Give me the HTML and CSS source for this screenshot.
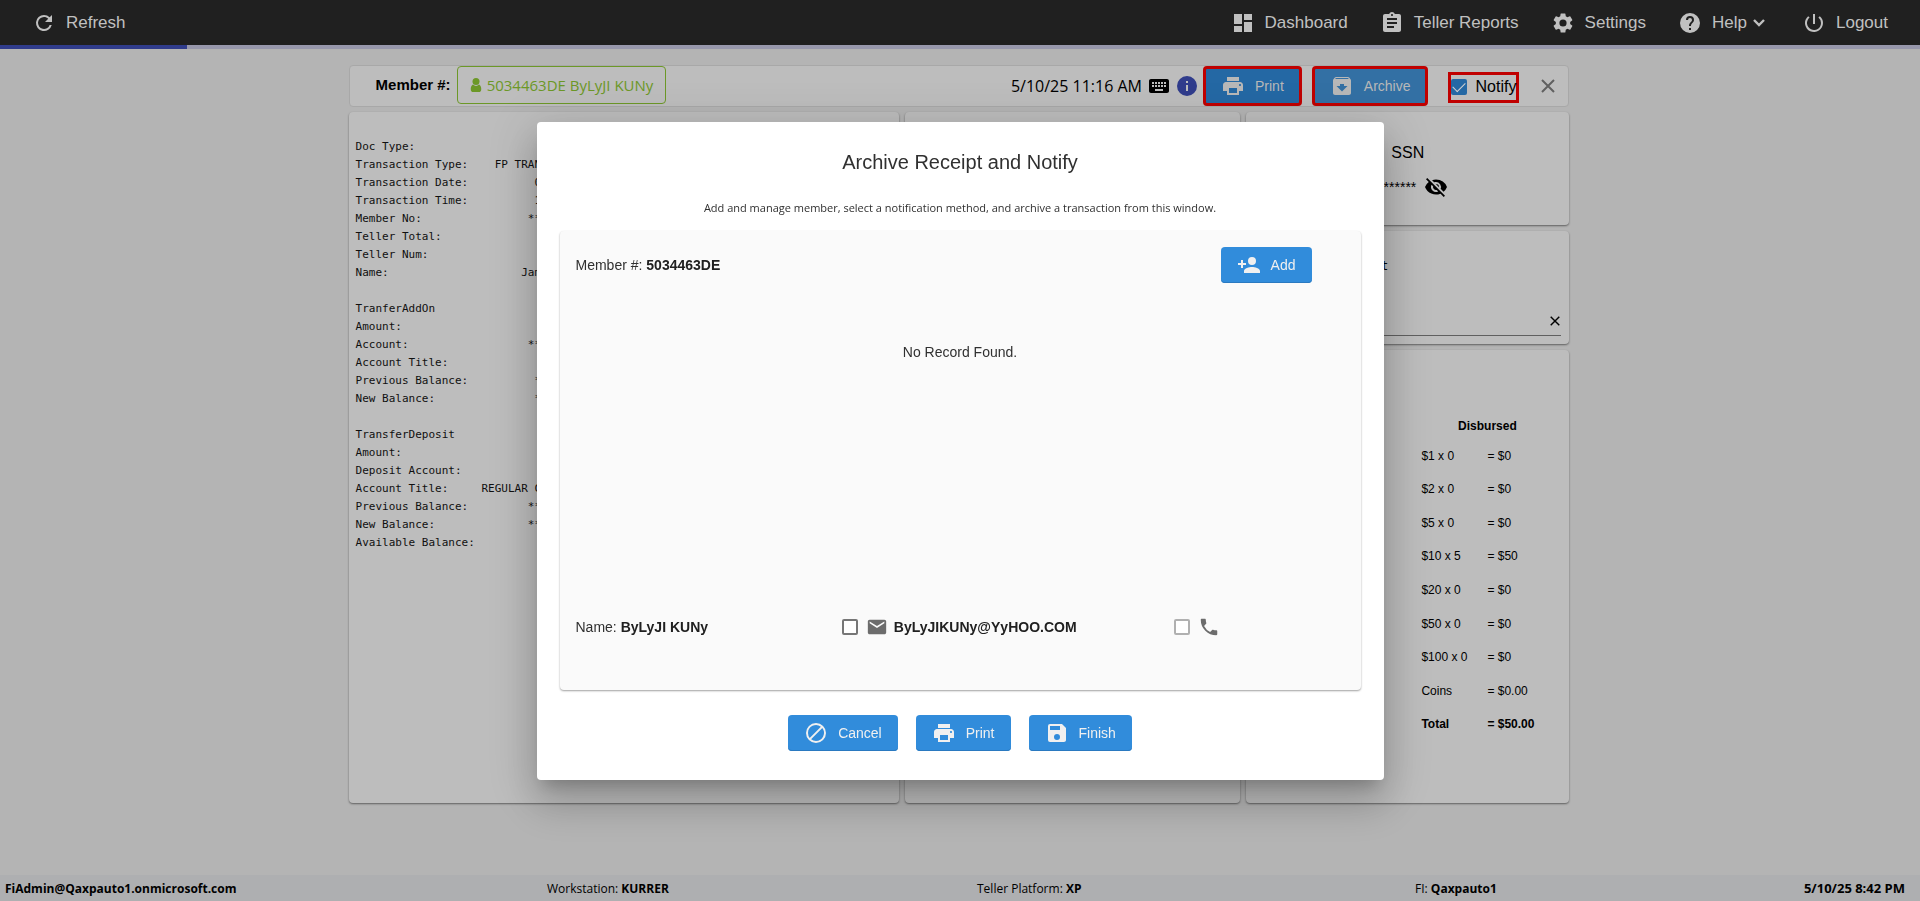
FILE: index.html
```html
<!DOCTYPE html>
<html lang="en">
	<head>
		<meta charset="utf-8"/>
		<title>Archive Receipt and Notify</title>
		<link rel="stylesheet" href="styles.css">
	</head>
	<body>
		<svg class="sprite" aria-hidden="true">
			<symbol id="i-print" viewBox="0 0 24 24"><path d="M19 8H5c-1.66 0-3 1.34-3 3v6h4v4h12v-4h4v-6c0-1.66-1.34-3-3-3zm-3 11H8v-5h8v5zm3-7c-.55 0-1-.45-1-1s.45-1 1-1 1 .45 1 1-.45 1-1 1zm-1-9H6v4h12V3z"/></symbol>
		</svg>

		<div class="page">
			<nav class="topbar flex">
				<a href="#" class="refresh"><svg class="icon" viewBox="0 0 24 24"><path d="M17.65 6.35A7.96 7.96 0 0 0 12 4a8 8 0 1 0 7.73 10h-2.08A6 6 0 1 1 12 6c1.66 0 3.14.69 4.22 1.78L13 11h7V4z"/></svg>Refresh</a>
				<a href="#"><svg class="icon" viewBox="0 0 24 24"><path d="M3 13h8V3H3v10zm0 8h8v-6H3v6zm10 0h8V11h-8v10zm0-18v6h8V3h-8z"/></svg>Dashboard</a>
				<a href="#"><svg class="icon" viewBox="0 0 24 24"><path d="M19 3h-4.18C14.4 1.84 13.3 1 12 1s-2.4.84-2.82 2H5c-1.1 0-2 .9-2 2v14c0 1.100.9 2 2 2h14c1.1 0 2-.9 2-2V5c0-1.100-.9-2-2-2zm-7 0c.55 0 1 .45 1 1s-.45 1-1 1-1-.45-1-1 .45-1 1-1zm2 14H7v-2h7v2zm3-4H7v-2h10v2zm0-4H7V7h10v2z"/></svg>Teller Reports</a>
				<a href="#"><svg class="icon" viewBox="0 0 24 24"><path d="M19.14 12.94c.04-.3.06-.61.06-.94s-.02-.64-.07-.94l2.03-1.58a.49.49 0 0 0 .12-.61l-1.92-3.32a.49.49 0 0 0-.59-.22l-2.39.96a7 7 0 0 0-1.62-.94l-.36-2.54A.48.48 0 0 0 13.920 2.400h-3.840a.48.48 0 0 0-.47.41l-.36 2.54a7.400 7.400 0 0 0-1.620.94l-2.390-.96a.48.48 0 0 0-.59.22L2.740 8.870a.47.47 0 0 0 .12.61l2.030 1.580c-.05.3-.09.63-.09.94s.02.64.07.94l-2.030 1.580a.49.49 0 0 0-.12.61l1.920 3.320c.12.22.37.29.59.22l2.390-.96c.5.38 1.030.7 1.620.94l.36 2.540c.05.24.24.41.48.41h3.840c.24 0 .44-.17.47-.41l.36-2.540a7 7 0 0 0 1.620-.94l2.390.96c.22.08.47 0 .59-.22l1.920-3.320a.47.47 0 0 0-.12-.61zM12 15.600a3.600 3.600 0 1 1 0-7.200 3.600 3.600 0 0 1 0 7.200z"/></svg>Settings</a>
				<a href="#" class="help"><svg class="icon" viewBox="0 0 24 24"><path d="M12 2a10 10 0 1 0 0 20 10 10 0 0 0 0-20zm1 17h-2v-2h2v2zm2.070-7.750l-.9.92C13.450 12.900 13 13.500 13 15h-2v-.5c0-1.100.45-2.100 1.170-2.830l1.240-1.260c.37-.36.59-.86.59-1.410a2 2 0 1 0-4 0H8a4 4 0 1 1 8 0c0 .88-.36 1.680-.93 2.250z"/></svg>Help<svg class="chevron" viewBox="0 0 12 8"><path d="M1 1l5 5 5-5"/></svg></a>
				<a href="#"><svg class="icon" viewBox="0 0 24 24"><path d="M13 3h-2v10h2V3zm4.830 2.170l-1.420 1.420A6.920 6.920 0 0 1 19 12a7 7 0 1 1-11.420-5.420L6.170 5.170A9 9 0 1 0 21 12a8.960 8.960 0 0 0-3.170-6.830z"/></svg>Logout</a>
			</nav>
			<div class="progress"><div class="progress-value"></div></div>

			<main class="content">
				<div class="toolbar flex">
					<b class="member-label">Member #:</b>
					<button type="button" class="member-chip flex"><svg viewBox="0 0 12 16"><circle cx="6" cy="4" r="4"/><path d="M2.500 7.500C1 8.500 0 10 0 12.500 0 15 1 16 2.500 16h7c1.500 0 2.500-1 2.500-3.500 0-2.500-1-4-2.500-5-2 2-5 2-7 0z"/></svg>5034463DE ByLyJI KUNy</button>
					<div class="tools flex">
						<span class="date">5/10/25 11:16 AM</span>
						<svg class="icon" viewBox="0 0 24 24"><path d="M20 5H4c-1.100 0-1.990.9-1.990 2L2 17c0 1.100.9 2 2 2h16c1.100 0 2-.9 2-2V7c0-1.100-.9-2-2-2zm-9 3h2v2h-2V8zm0 3h2v2h-2v-2zM8 8h2v2H8V8zm0 3h2v2H8v-2zm-1 2H5v-2h2v2zm0-3H5V8h2v2zm9 7H8v-2h8v2zm0-4h-2v-2h2v2zm0-3h-2V8h2v2zm3 3h-2v-2h2v2zm0-3h-2V8h2v2z"/></svg>
						<svg class="icon info" viewBox="0 0 24 24"><path d="M12 2a10 10 0 1 0 0 20 10 10 0 0 0 0-20zm1 15h-2v-6h2v6zm0-8h-2V7h2v2z"/></svg>
						<button type="button" class="btn marked"><svg class="icon"><use href="#i-print"/></svg>Print</button>
						<button type="button" class="btn marked focused"><svg class="icon" viewBox="0 0 24 24"><path d="M20.540 5.230l-1.390-1.680A1.450 1.450 0 0 0 18 3H6c-.47 0-.88.21-1.160.55L3.460 5.230C3.170 5.570 3 6.020 3 6.500V19c0 1.100.9 2 2 2h14c1.100 0 2-.9 2-2V6.500c0-.48-.17-.93-.46-1.270zM12 17.500L6.500 12H10v-2h4v2h3.500L12 17.500zM5.120 5l.81-1h12l.94 1H5.120z"/></svg>Archive</button>
						<label class="notify flex"><input type="checkbox" checked/>Notify</label>
						<button type="button" class="plain" aria-label="Close"><svg class="close" viewBox="0 0 14 14"><path d="M1 1l12 12M13 1L1 13"/></svg></button>
					</div>
				</div>

				<div class="columns">
					<section class="panel receipt">
<pre>
Doc Type:                   RECEIPT
Transaction Type:    FP TRANSACTION
Transaction Date:          05-10-25
Transaction Time:          11:16:05
Member No:                *****63DE
Teller Total:                     1
Teller Num:                    1491
Name:                    James Dean

TranferAddOn
Amount:                      500.00
Account:                  ****85-42
Account Title:                HEROC
Previous Balance:          ********
New Balance:               ********

TransferDeposit
Amount:                      500.00
Deposit Account:            **585-4
Account Title:     REGULAR CHECKING
Previous Balance:         *********
New Balance:              *********
Available Balance:          *******
</pre>
					</section>
					<section class="panel scans"></section>
					<div class="side">
						<section class="panel ssn">
							<div>SSN</div>
							<div class="masked flex">*********<svg class="icon" viewBox="0 0 24 24"><path d="M12 7a5 5 0 0 1 4.640 6.830l2.920 2.920A11.820 11.820 0 0 0 22.990 12 11.820 11.820 0 0 0 12 4.500c-1.400 0-2.740.25-3.980.7l2.160 2.160C10.740 7.130 11.350 7 12 7zM2 4.270l2.280 2.280.46.46A11.800 11.800 0 0 0 1 12a11.820 11.820 0 0 0 15.380 6.660l.42.420L19.730 22 21 20.730 3.270 3 2 4.270zM7.530 9.800l1.550 1.550A3 3 0 0 0 12.650 14.920l1.550 1.550A5 5 0 0 1 7.530 9.800zm4.310-.78l3.150 3.150.02-.16a3 3 0 0 0-3-3l-.17.01z"/></svg></div>
						</section>
						<section class="panel client">
							<label for="note">Cash to the client</label>
							<div class="field flex">
								<input type="text" id="note"/>
								<button type="button" class="plain" aria-label="Clear"><svg class="clear" viewBox="0 0 14 14"><path d="M1 1l12 12M13 1L1 13"/></svg></button>
							</div>
						</section>
						<section class="panel cash flex">
							<table>
								<caption>Received</caption>
								<tr><td>$1 x 0</td><td>= $0</td></tr>
								<tr><td>$2 x 0</td><td>= $0</td></tr>
								<tr><td>$5 x 0</td><td>= $0</td></tr>
								<tr><td>$10 x 0</td><td>= $0</td></tr>
								<tr><td>$20 x 0</td><td>= $0</td></tr>
								<tr><td>$50 x 0</td><td>= $0</td></tr>
								<tr><td>$100 x 2</td><td>= $200</td></tr>
								<tr><td>Coins</td><td>= $0.00</td></tr>
								<tr class="total"><td>Total</td><td>= $200.00</td></tr>
							</table>
							<table>
								<caption>Disbursed</caption>
								<tr><td>$1 x 0</td><td>= $0</td></tr>
								<tr><td>$2 x 0</td><td>= $0</td></tr>
								<tr><td>$5 x 0</td><td>= $0</td></tr>
								<tr><td>$10 x 5</td><td>= $50</td></tr>
								<tr><td>$20 x 0</td><td>= $0</td></tr>
								<tr><td>$50 x 0</td><td>= $0</td></tr>
								<tr><td>$100 x 0</td><td>= $0</td></tr>
								<tr><td>Coins</td><td>= $0.00</td></tr>
								<tr class="total"><td>Total</td><td>= $50.00</td></tr>
							</table>
						</section>
					</div>
				</div>
			</main>

			<footer class="footer">
				<b>FiAdmin@Qaxpauto1.onmicrosoft.com</b>
				<span>Workstation: <b>KURRER</b></span>
				<span>Teller Platform: <b>XP</b></span>
				<span>FI: <b>Qaxpauto1</b></span>
				<b class="clock">5/10/25 8:42 PM</b>
			</footer>
		</div>

		<div class="overlay flex">
			<div class="dialog" role="dialog" aria-modal="true" aria-labelledby="dialog-title">
				<h1 id="dialog-title">Archive Receipt and Notify</h1>
				<p class="description">Add and manage member, select a notification method, and archive a transaction from this window.</p>
				<div class="card">
					<div class="card-head flex">
						<span>Member #: <b>5034463DE</b></span>
						<button type="button" class="btn"><svg class="icon" viewBox="0 0 24 24"><path d="M15 12a4 4 0 1 0 0-8 4 4 0 0 0 0 8zm-9-2V7H4v3H1v2h3v3h2v-3h3v-2H6zm9 4c-2.670 0-8 1.340-8 4v2h16v-2c0-2.660-5.330-4-8-4z"/></svg>Add</button>
					</div>
					<div class="empty">No Record Found.</div>
					<div class="contact">
						<span>Name: <b>ByLyJI KUNy</b></span>
						<label class="flex"><input type="checkbox" class="box"/><svg class="icon" viewBox="0 0 24 24"><path d="M20 4H4c-1.100 0-1.990.9-1.990 2L2 18c0 1.100.9 2 2 2h16c1.100 0 2-.9 2-2V6c0-1.100-.9-2-2-2zm0 4l-8 5-8-5V6l8 5 8-5v2z"/></svg><b>ByLyJIKUNy@YyHOO.COM</b></label>
						<label class="flex" aria-label="Phone"><input type="checkbox" class="box" disabled/><svg class="icon" viewBox="0 0 24 24"><path d="M6.620 10.790a15.150 15.150 0 0 0 6.590 6.590l2.200-2.200c.27-.27.67-.36 1.020-.24 1.120.37 2.330.57 3.570.57.55 0 1 .45 1 1V20c0 .55-.45 1-1 1A17 17 0 0 1 3 4c0-.55.45-1 1-1h3.500c.55 0 1 .45 1 1 0 1.250.2 2.450.57 3.570.11.35.03.74-.25 1.020l-2.200 2.200z"/></svg></label>
					</div>
				</div>
				<div class="actions flex">
					<button type="button" class="btn"><svg class="icon" viewBox="0 0 24 24"><path d="M12 2a10 10 0 1 0 0 20 10 10 0 0 0 0-20zM4 12a8 8 0 0 1 12.900-6.310L5.690 16.900A7.900 7.900 0 0 1 4 12zm8 8a7.900 7.900 0 0 1-4.900-1.690L18.310 7.100A8 8 0 0 1 12 20z"/></svg>Cancel</button>
					<button type="button" class="btn"><svg class="icon"><use href="#i-print"/></svg>Print</button>
					<button type="button" class="btn"><svg class="icon" viewBox="0 0 24 24"><path d="M17 3H5a2 2 0 0 0-2 2v14a2 2 0 0 0 2 2h14c1.100 0 2-.9 2-2V7l-4-4zm-5 16a3 3 0 1 1 0-6 3 3 0 0 1 0 6zm3-10H5V5h10v4z"/></svg>Finish</button>
				</div>
			</div>
		</div>
	</body>
</html>
```
FILE: styles.css
```css
html, body {
	height: 100%;
	margin: 0;
}
body {
	background: #b4b4b4;
	color: #000;
	font-family: "Liberation Sans", Arial, sans-serif;
	font-size: 16px;
}
* {
	box-sizing: border-box;
}
.flex {
	display: flex;
	align-items: center;
}
button, input {
	font-family: inherit;
}
button {
	cursor: pointer;
}
.sprite {
	display: none;
}
.icon {
	flex: none;
	width: 24px;
	height: 24px;
	fill: currentColor;
}
.page {
	display: flex;
	flex-direction: column;
	min-height: 100%;
}

/* top bar */
.topbar {
	height: 45px;
	padding: 0 32px;
	gap: 32px;
	background: #202020;
	font-size: 17px;
}
.topbar a {
	display: flex;
	align-items: center;
	gap: 10px;
	color: #c0c0c0;
	text-decoration: none;
}
.topbar .refresh {
	margin-right: auto;
}
.topbar .help {
	margin-right: 5px;
}
.chevron {
	width: 12px;
	height: 8px;
	margin-left: -4px;
	fill: none;
	stroke: currentColor;
	stroke-width: 2.400;
}
.progress {
	height: 4px;
	background: #9898ac;
}
.progress-value {
	width: 187px;
	height: 100%;
	background: #303c8c;
}

/* content */
.content {
	flex: 1;
	width: 64%;
	margin: 16px auto 0;
	padding: 0 5px 0 3px;
}
.toolbar {
	height: 42px;
	padding: 0 7px 0 26px;
	border: 1px solid #a8a8a8;
	border-radius: 4px;
	background: #bdbdbd;
}
.member-label {
	padding-bottom: 4px;
	font-size: 15px;
}
.member-chip {
	height: 38px;
	margin: 0 0 2px 6px;
	padding: 0 12px;
	gap: 5px;
	border: 1px solid #6c9827;
	border-radius: 4px;
	background: none;
	color: #6c9827;
	font-family: "Open Sans", sans-serif;
	font-size: 15px;
}
.member-chip svg {
	width: 12px;
	height: 14px;
	fill: currentColor;
}
.tools {
	margin-left: auto;
}
.date {
	margin-right: 5px;
	font-family: "Open Sans", sans-serif;
	font-size: 16px;
}
.info {
	margin: 0 4px;
	color: #303c8c;
}
.btn {
	display: flex;
	align-items: center;
	height: 36px;
	padding: 0 16px;
	gap: 10px;
	border: none;
	border-radius: 4px;
	background: #318cdb;
	color: #f0f0f0;
	font-size: 14px;
	box-shadow: inset 0 -1px 0 #2a79c0;
}
.marked {
	height: 40px;
	padding: 0 15px;
	border: 3px solid #c00000;
	background: #2468a4;
	color: #b8b8b8;
	box-shadow: none;
}
.focused {
	margin-left: 10px;
	background: #3370a4;
}
.notify {
	height: 31px;
	margin: 2px 16px 0 20px;
	gap: 8px;
	border: 3px solid #c00000;
}
.notify input {
	appearance: none;
	display: grid;
	place-content: center;
	width: 16px;
	height: 16px;
	margin: 0;
	padding-bottom: 3px;
	border-radius: 2px;
	background: #2468a4;
}
.notify input::before {
	content: "";
	width: 11px;
	height: 6px;
	border-left: 1px solid #d0d0d0;
	border-bottom: 1px solid #d0d0d0;
	transform: rotate(-45deg);
}
.plain {
	display: flex;
	padding: 6px;
	border: none;
	background: none;
}
.close, .clear {
	width: 14px;
	height: 14px;
	stroke: #606060;
	stroke-width: 2;
}
.clear {
	width: 10px;
	height: 10px;
	stroke: #000;
}
.columns {
	display: grid;
	grid-template-columns: 550fr 335fr 323fr;
	gap: 6px;
	margin-top: 5px;
}
.panel {
	border-radius: 4px;
	background: #bdbdbd;
	box-shadow: 0 1px 2px #606060;
}
.receipt {
	padding: 26px 7px;
}
.receipt pre {
	margin: 0;
	font-family: "DejaVu Sans Mono", monospace;
	font-size: 11px;
	line-height: 18px;
	color: #101010;
}
.side {
	display: grid;
	grid-template-rows: 113px 113px 453px;
	gap: 6px;
}
.ssn {
	padding: 32px 12px 0;
	text-align: center;
}
.ssn div:first-child {
	line-height: 18px;
}
.masked {
	justify-content: center;
	margin-top: 13px;
	gap: 8px;
	font-size: 14px;
}
.client {
	padding: 25px 8px 0 12px;
}
.client label {
	font-family: "DejaVu Sans Mono", monospace;
	font-size: 12px;
	line-height: 20px;
}
.field {
	margin-top: 31px;
	border-bottom: 1px solid #606060;
}
.field input {
	flex: 1;
	min-width: 0;
	height: 28px;
	border: none;
	outline: none;
	background: none;
}
.field .plain {
	padding: 2px 1px;
}
.cash {
	align-items: flex-start;
	justify-content: space-between;
	padding: 66px 16px 0 17px;
}
.cash table {
	width: 132px;
	height: 302px;
	border-collapse: collapse;
	font-size: 12px;
}
.cash caption {
	height: 23px;
	padding-top: 3px;
	font-weight: bold;
}
.cash td {
	width: 66px;
	padding: 0;
}
.total {
	font-weight: bold;
}

/* footer */
.footer {
	display: grid;
	grid-template-columns: 542fr 430fr 438fr 300fr 190fr;
	align-items: center;
	height: 26px;
	padding: 0 15px 0 5px;
	background: #aeafb1;
	font-family: "Open Sans", sans-serif;
	font-size: 12px;
}
.clock {
	font-size: 13px;
	text-align: right;
}

/* dialog */
.overlay {
	position: fixed;
	top: 0;
	right: 0;
	bottom: 0;
	left: 0;
	justify-content: center;
}
.dialog {
	width: 90%;
	max-width: 847px;
	padding: 24px 23px 29px;
	border-radius: 4px;
	background: #fff;
	color: #303030;
	box-shadow: 0 11px 15px -7px rgba(0, 0, 0, .2), 0 24px 38px 3px rgba(0, 0, 0, .14), 0 9px 46px 8px rgba(0, 0, 0, .12);
}
.dialog h1 {
	margin: 0;
	font-size: 20px;
	font-weight: normal;
	line-height: 32px;
	text-align: center;
}
.description {
	margin: 20px 0 13px;
	font-family: "Open Sans", sans-serif;
	font-size: 11px;
	line-height: 20px;
	text-align: center;
}
.card {
	padding: 16px 16px 52px;
	border-radius: 4px;
	background: #fafafa;
	box-shadow: 0 1px 2px #a0a0a0;
	font-size: 14px;
}
.card b {
	color: #202020;
}
.card-head {
	justify-content: space-between;
	padding-right: 33px;
}
.empty {
	height: 266px;
	padding-top: 61px;
	text-align: center;
}
.contact {
	display: grid;
	grid-template-columns: 266fr 332fr 170fr;
	align-items: center;
	margin-top: 67px;
}
.contact label {
	gap: 6px;
}
.contact .icon {
	width: 22px;
	height: 22px;
	margin-left: 2px;
	color: #6c6c6c;
}
.box {
	appearance: none;
	width: 16px;
	height: 16px;
	margin: 0;
	border: 2px solid #767676;
	border-radius: 2px;
	background: #fff;
}
.box:disabled {
	border-color: #b0b0b0;
}
.actions {
	justify-content: center;
	gap: 18px;
	margin-top: 25px;
}
```
